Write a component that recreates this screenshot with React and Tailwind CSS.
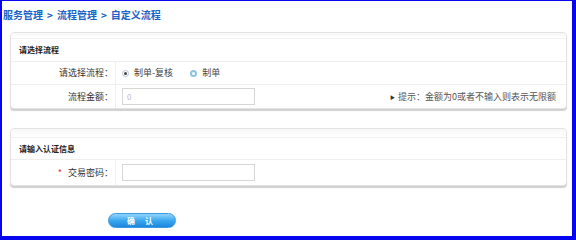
export default function App() {
  const font = { fontFamily: '"Noto Sans CJK SC", "Noto Sans", sans-serif' };

  return (
    <div
      style={font}
      className="w-[576px] h-[240px] bg-white border-t border-l-2 border-r-4 border-b-4 border-[#0606ee] overflow-hidden"
    >
      {/* BREADCRUMB */}
      <div className="pt-[7px] pl-[1px] text-[10px] leading-[14px] font-bold text-[#1a62c4] whitespace-nowrap">
        服务管理<span className="mx-[4px]">&gt;</span>流程管理<span className="mx-[4px]">&gt;</span>自定义流程
      </div>

      {/* PANEL 1 */}
      <div className="mt-[10px] ml-[8px] mr-[5px] bg-white border border-[#e3e3e3] rounded-[4px] shadow-[0_2px_1px_#d0d0d0]">
        <div className="h-[6px] border-b border-[#f1f1f1] bg-gradient-to-b from-[#f7f7f7] to-white rounded-t-[4px]"></div>
        <div className="pt-[5px] pb-[5px] pl-[8px] text-[8px] leading-[12px] font-bold text-[#222] border-b border-[#eeeeee]">
          请选择流程
        </div>

        <div className="flex h-[23px] border-b border-[#eeeeee]">
          <div className="w-[105px] flex items-center justify-end pr-[2px] border-r border-[#efefef] text-[9px] text-[#333]">
            请选择流程：
          </div>
          <div className="flex items-center pl-[6px] text-[9px] text-[#444]">
            <span className="w-[7px] h-[7px] rounded-full border border-[#b8c6d2] bg-white flex items-center justify-center">
              <span className="w-[3px] h-[3px] rounded-full bg-[#444]"></span>
            </span>
            <span className="ml-[5px]">制单-复核</span>
            <span className="ml-[17px] w-[7px] h-[7px] rounded-full border-2 border-[#8fc3e6] bg-white"></span>
            <span className="ml-[5px]">制单</span>
          </div>
        </div>

        <div className="flex h-[23px] items-center">
          <div className="w-[105px] h-full flex items-center justify-end pr-[2px] border-r border-[#efefef] text-[9px] text-[#333]">
            流程金额：
          </div>
          <div className="pl-[6px]">
            <div className="w-[133px] h-[17px] border border-[#d6d6d6] flex items-center pl-[4px] text-[8px] text-[#bbb]">
              0
            </div>
          </div>
          <div className="ml-auto pr-[10px] flex items-center text-[9px] text-[#555]">
            <span className="text-[5px] mr-[3px] text-[#333]">▶</span>
            提示：金额为0或者不输入则表示无限额
          </div>
        </div>
      </div>

      {/* PANEL 2 */}
      <div className="mt-[19px] ml-[8px] mr-[5px] bg-white border border-[#e3e3e3] rounded-[4px] shadow-[0_2px_1px_#d0d0d0]">
        <div className="h-[9px] border-b border-[#f1f1f1] bg-gradient-to-b from-[#f7f7f7] to-white rounded-t-[4px]"></div>
        <div className="pt-[5px] pb-[4px] pl-[8px] text-[8px] leading-[12px] font-bold text-[#222] border-b border-[#eeeeee]">
          请输入认证信息
        </div>

        <div className="flex h-[25px] items-center">
          <div className="w-[105px] h-full flex items-center justify-end pr-[2px] border-r border-[#efefef] text-[9px] text-[#333]">
            <span className="text-[#e0283c] mr-[6px]">*</span>
            交易密码：
          </div>
          <div className="pl-[6px]">
            <div className="w-[133px] h-[17px] border border-[#d6d6d6]"></div>
          </div>
        </div>
      </div>

      {/* SUBMIT */}
      <div className="flex mt-[27px] ml-[106px]">
        <button className="w-[68px] h-[15px] rounded-full border border-[#3a9ae0] bg-gradient-to-b from-[#8fd4fb] via-[#3aa8ef] to-[#1a86de] text-white text-[8px] leading-[13px] font-bold tracking-[4px]">
          确 认
        </button>
      </div>
    </div>
  );
}
